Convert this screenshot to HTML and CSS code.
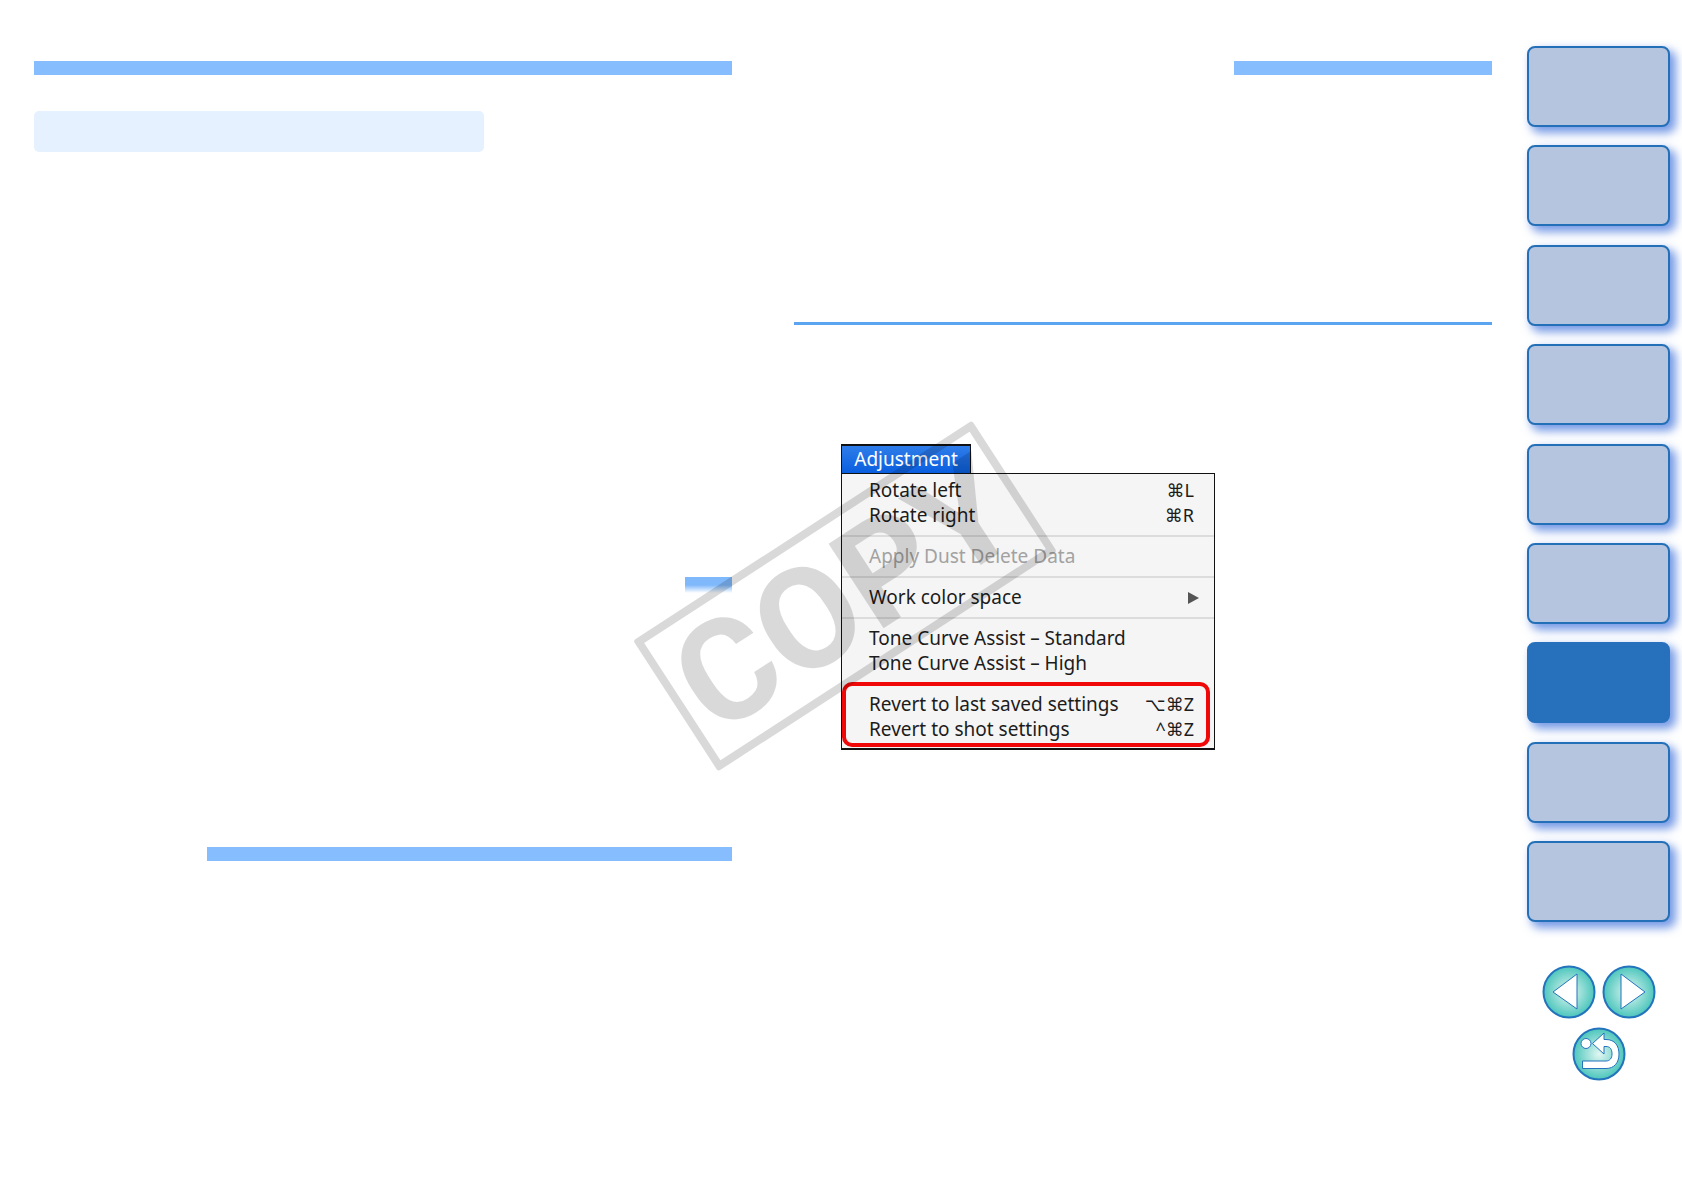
FILE: index.html
```html
<!DOCTYPE html>
<html lang="en">
<head>
<meta charset="utf-8">
<meta name="viewport" content="width=device-width, initial-scale=1">
<title>Adjustment</title>
<link rel="stylesheet" href="styles.css">
</head>
<body>
<div class="page">
  <main class="columns">
    <section class="column">
      <div class="bar"></div>
      <div class="heading-box"></div>
      <div class="bar bar-fade"></div>
      <div class="bar bar-section"></div>
    </section>
    <section class="column">
      <div class="bar bar-short"></div>
      <hr class="rule">
      <div class="figure">
        <button class="menu-title" type="button">Adjustment</button>
        <div class="menu">
          <button class="item" type="button"><span>Rotate left</span><kbd>⌘L</kbd></button>
          <button class="item" type="button"><span>Rotate right</span><kbd>⌘R</kbd></button>
          <hr class="separator">
          <button class="item" type="button" disabled>Apply Dust Delete Data</button>
          <hr class="separator">
          <button class="item item-parent" type="button"><span>Work color space</span><svg class="arrow" viewBox="0 0 11 12" aria-hidden="true"><path d="M0 0L11 6L0 12Z"/></svg></button>
          <hr class="separator">
          <button class="item" type="button">Tone Curve Assist – Standard</button>
          <button class="item" type="button">Tone Curve Assist – High</button>
          <div class="marked">
            <button class="item" type="button"><span>Revert to last saved settings</span><kbd>⌥⌘Z</kbd></button>
            <button class="item" type="button"><span>Revert to shot settings</span><kbd>^⌘Z</kbd></button>
          </div>
        </div>
        <div class="watermark">COPY</div>
      </div>
    </section>
  </main>
  <aside class="sidebar">
    <nav class="tabs" aria-label="Chapters">
      <a class="tab" href="#1" aria-label="1"></a>
      <a class="tab" href="#2" aria-label="2"></a>
      <a class="tab" href="#3" aria-label="3"></a>
      <a class="tab" href="#4" aria-label="4"></a>
      <a class="tab" href="#5" aria-label="5"></a>
      <a class="tab" href="#6" aria-label="6"></a>
      <a class="tab tab-current" href="#7" aria-label="7"></a>
      <a class="tab" href="#8" aria-label="8"></a>
      <a class="tab" href="#9" aria-label="9"></a>
    </nav>
    <nav class="pager" aria-label="Pages">
      <a href="#previous" aria-label="Previous page">
        <svg class="round" viewBox="0 0 54 54">
          <defs><radialGradient id="teal"><stop offset="0" stop-color="#e2f7f2"/><stop offset="1" stop-color="#4cc6bc"/></radialGradient></defs>
          <circle cx="27" cy="27" r="25.5" fill="url(#teal)" stroke="#2373bd" stroke-width="2"/>
          <path d="M11 27L35 9V44Z" fill="#fff" stroke="#2373bd"/>
        </svg>
      </a>
      <a href="#next" aria-label="Next page">
        <svg class="round" viewBox="0 0 54 54">
          <circle cx="27" cy="27" r="25.5" fill="url(#teal)" stroke="#2373bd" stroke-width="2"/>
          <path d="M43 27L19 9V44Z" fill="#fff" stroke="#2373bd"/>
        </svg>
      </a>
      <a href="#back" aria-label="Back">
        <svg class="round" viewBox="0 0 54 54">
          <circle cx="27" cy="27" r="25.5" fill="url(#teal)" stroke="#2373bd" stroke-width="2"/>
          <circle cx="14" cy="16.500" r="5" fill="#fff" stroke="#2373bd"/>
          <path d="M20.500 16.500L32 6V12.500H34C43 12.500 47 19 47 27C47 36 42 41.500 34 41.500H10.500V34H34C38 34 40 31 40 27C40 22 38 19.500 34 19.500H32V27Z" fill="#fff" stroke="#2373bd"/>
        </svg>
      </a>
    </nav>
  </aside>
</div>
</body>
</html>
```
FILE: styles.css
```css
* {
  box-sizing: border-box;
}

body {
  margin: 0;
  background: #fff;
  font-family: "Noto Sans", "Open Sans", sans-serif;
  overflow-x: hidden;
}

.page {
  display: flex;
  gap: 35px;
  min-height: 100vh;
  padding: 46px 12px 46px 34px;
}

.columns {
  flex: 1;
  display: grid;
  grid-template-columns: 1fr 1fr;
  gap: 62px;
  padding-top: 15px;
}

.bar {
  height: 14px;
  background: #85bdff;
}

.heading-box {
  width: 450px;
  height: 41px;
  margin-top: 36px;
  border-radius: 5px;
  background: #e5f1fe;
}

.bar-fade {
  width: 47px;
  height: 16px;
  margin: 425px 0 0 auto;
  background: linear-gradient(#7fb8fb 50%, #fff);
}

.bar-section {
  margin: 254px 0 0 173px;
}

.bar-short {
  width: 258px;
  margin-left: auto;
}

.rule {
  height: 3px;
  margin: 247px 0 0;
  border: 0;
  background: #5ba5f0;
}

/* Menu illustration */
.figure {
  position: relative;
  width: 374px;
  margin: 119px 0 0 47px;
}

.menu-title,
.item {
  font-family: inherit;
  font-size: 19px;
  line-height: 25px;
}

.menu-title {
  display: block;
  width: 130px;
  height: 29px;
  padding: 0;
  border: 1px solid #111;
  border-width: 2px 1px 0;
  background: linear-gradient(#2f7dea, #0a5fdf);
  color: #fff;
}

.menu {
  padding: 4px 0 1px;
  border: 1px solid #111;
  border-bottom-width: 2px;
  background: #f5f5f5;
}

.item {
  display: flex;
  justify-content: space-between;
  align-items: center;
  width: 100%;
  height: 25px;
  padding: 0 20px 0 27px;
  border: 0;
  background: none;
  color: #1c1c1c;
  text-align: left;
}

.item:disabled {
  color: #a2a2a2;
}

.item-parent {
  padding-right: 15px;
}

.item kbd {
  font-family: "Noto Sans", "DejaVu Sans", sans-serif;
  font-size: 18px;
}

.arrow {
  width: 11px;
  height: 14px;
  fill: #555;
}

.separator {
  height: 2px;
  margin: 7px 0;
  border: 0;
  background: #dcdcdc;
}

.marked {
  margin: 6px 4px 0 0;
  padding: 6px 0 1px;
  border: 4px solid #f00707;
  border-radius: 10px;
}

.marked .item {
  padding: 0 12px 0 23px;
}

.watermark {
  position: absolute;
  left: -198px;
  top: 74px;
  width: 404px;
  height: 156px;
  border: 8px solid;
  border-radius: 3px;
  color: rgb(0 0 0 / 15%);
  font: bold 142px/140px Roboto, "Liberation Sans", sans-serif;
  text-align: center;
  white-space: nowrap;
  transform: rotate(-33deg);
  pointer-events: none;
}

/* Chapter tabs and page controls */
.sidebar {
  width: 143px;
}

.tabs {
  display: flex;
  flex-direction: column;
  justify-content: space-between;
  height: 876px;
}

.tab {
  height: 81px;
  border: 2px solid #2470b8;
  border-radius: 8px;
  background: #b5c5e0;
  box-shadow: 5px 5px 10px 1px rgb(45 100 215 / 65%);
}

.tab-current {
  background: #2670bc;
  border-color: #2670bc;
}

.pager {
  display: flex;
  flex-wrap: wrap;
  justify-content: center;
  gap: 8px 6px;
  margin-top: 43px;
}

.round {
  display: block;
  width: 54px;
  height: 54px;
}
```
